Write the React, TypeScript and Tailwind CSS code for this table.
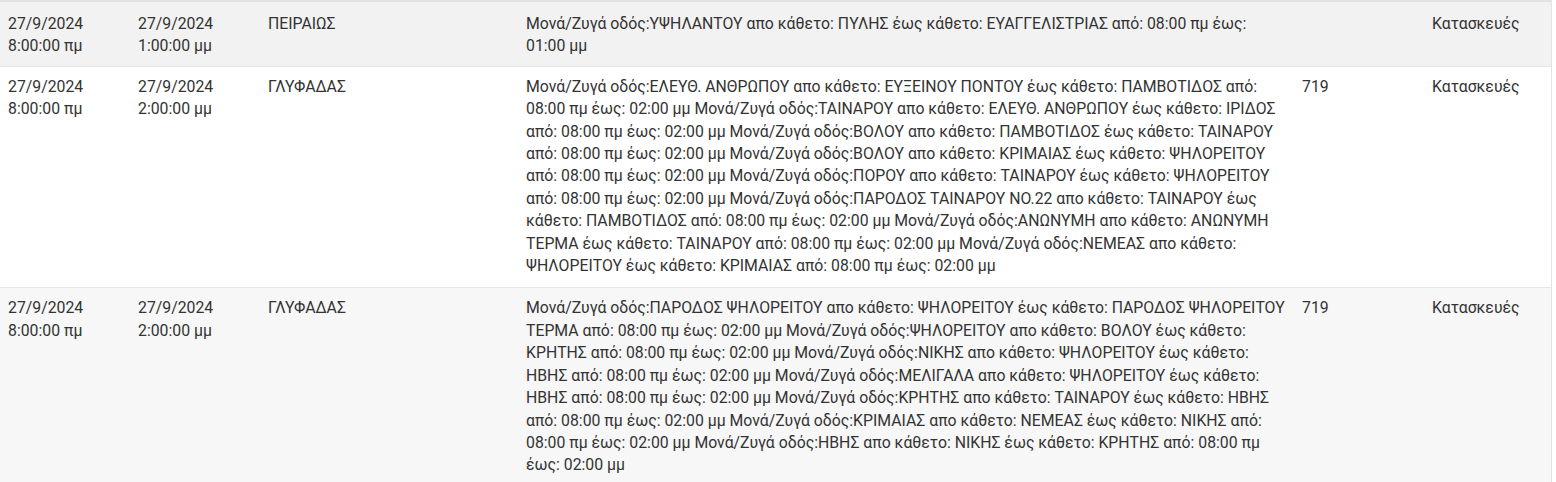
const rows = [
  {
    start: ["27/9/2024", "8:00:00 πμ"],
    end: ["27/9/2024", "1:00:00 μμ"],
    area: "ΠΕΙΡΑΙΩΣ",
    desc: "Μονά/Ζυγά οδός:ΥΨΗΛΑΝΤΟΥ απο κάθετο: ΠΥΛΗΣ έως κάθετο: ΕΥΑΓΓΕΛΙΣΤΡΙΑΣ από: 08:00 πμ έως: 01:00 μμ",
    code: "",
    type: "Κατασκευές",
    bg: "bg-[#f2f2f2]",
    pad: "pt-[11px] pb-[8px]",
  },
  {
    start: ["27/9/2024", "8:00:00 πμ"],
    end: ["27/9/2024", "2:00:00 μμ"],
    area: "ΓΛΥΦΑΔΑΣ",
    desc: "Μονά/Ζυγά οδός:ΕΛΕΥΘ. ΑΝΘΡΩΠΟΥ απο κάθετο: ΕΥΞΕΙΝΟΥ ΠΟΝΤΟΥ έως κάθετο: ΠΑΜΒΟΤΙΔΟΣ από: 08:00 πμ έως: 02:00 μμ Μονά/Ζυγά οδός:ΤΑΙΝΑΡΟΥ απο κάθετο: ΕΛΕΥΘ. ΑΝΘΡΩΠΟΥ έως κάθετο: ΙΡΙΔΟΣ από: 08:00 πμ έως: 02:00 μμ Μονά/Ζυγά οδός:ΒΟΛΟΥ απο κάθετο: ΠΑΜΒΟΤΙΔΟΣ έως κάθετο: ΤΑΙΝΑΡΟΥ από: 08:00 πμ έως: 02:00 μμ Μονά/Ζυγά οδός:ΒΟΛΟΥ απο κάθετο: ΚΡΙΜΑΙΑΣ έως κάθετο: ΨΗΛΟΡΕΙΤΟΥ από: 08:00 πμ έως: 02:00 μμ Μονά/Ζυγά οδός:ΠΟΡΟΥ απο κάθετο: ΤΑΙΝΑΡΟΥ έως κάθετο: ΨΗΛΟΡΕΙΤΟΥ από: 08:00 πμ έως: 02:00 μμ Μονά/Ζυγά οδός:ΠΑΡΟΔΟΣ ΤΑΙΝΑΡΟΥ ΝΟ.22 απο κάθετο: ΤΑΙΝΑΡΟΥ έως κάθετο: ΠΑΜΒΟΤΙΔΟΣ από: 08:00 πμ έως: 02:00 μμ Μονά/Ζυγά οδός:ΑΝΩΝΥΜΗ απο κάθετο: ΑΝΩΝΥΜΗ ΤΕΡΜΑ έως κάθετο: ΤΑΙΝΑΡΟΥ από: 08:00 πμ έως: 02:00 μμ Μονά/Ζυγά οδός:ΝΕΜΕΑΣ απο κάθετο: ΨΗΛΟΡΕΙΤΟΥ έως κάθετο: ΚΡΙΜΑΙΑΣ από: 08:00 πμ έως: 02:00 μμ",
    code: "719",
    type: "Κατασκευές",
    bg: "bg-white",
    pad: "pt-[9px] pb-[10px]",
  },
  {
    start: ["27/9/2024", "8:00:00 πμ"],
    end: ["27/9/2024", "2:00:00 μμ"],
    area: "ΓΛΥΦΑΔΑΣ",
    desc: "Μονά/Ζυγά οδός:ΠΑΡΟΔΟΣ ΨΗΛΟΡΕΙΤΟΥ απο κάθετο: ΨΗΛΟΡΕΙΤΟΥ έως κάθετο: ΠΑΡΟΔΟΣ ΨΗΛΟΡΕΙΤΟΥ ΤΕΡΜΑ από: 08:00 πμ έως: 02:00 μμ Μονά/Ζυγά οδός:ΨΗΛΟΡΕΙΤΟΥ απο κάθετο: ΒΟΛΟΥ έως κάθετο: ΚΡΗΤΗΣ από: 08:00 πμ έως: 02:00 μμ Μονά/Ζυγά οδός:ΝΙΚΗΣ απο κάθετο: ΨΗΛΟΡΕΙΤΟΥ έως κάθετο: ΗΒΗΣ από: 08:00 πμ έως: 02:00 μμ Μονά/Ζυγά οδός:ΜΕΛΙΓΑΛΑ απο κάθετο: ΨΗΛΟΡΕΙΤΟΥ έως κάθετο: ΗΒΗΣ από: 08:00 πμ έως: 02:00 μμ Μονά/Ζυγά οδός:ΚΡΗΤΗΣ απο κάθετο: ΤΑΙΝΑΡΟΥ έως κάθετο: ΗΒΗΣ από: 08:00 πμ έως: 02:00 μμ Μονά/Ζυγά οδός:ΚΡΙΜΑΙΑΣ απο κάθετο: ΝΕΜΕΑΣ έως κάθετο: ΝΙΚΗΣ από: 08:00 πμ έως: 02:00 μμ Μονά/Ζυγά οδός:ΗΒΗΣ απο κάθετο: ΝΙΚΗΣ έως κάθετο: ΚΡΗΤΗΣ από: 08:00 πμ έως: 02:00 μμ",
    code: "719",
    type: "Κατασκευές",
    bg: "bg-[#f7f7f7]",
    pad: "pt-[9px] pb-[10px]",
  },
];

export default function App() {
  return (
    <div className="w-[1552px] border-r border-[#e4e4e4] bg-white font-['Roboto',sans-serif] text-[15.8px] leading-[22.4px] text-[#333]">
      <table className="w-full table-fixed border-collapse border-t-2 border-[#e2e2e2]">
        <colgroup>
          <col className="w-[130px]" />
          <col className="w-[130px]" />
          <col className="w-[258px]" />
          <col className="w-[776px]" />
          <col className="w-[130px]" />
          <col />
        </colgroup>
        <tbody>
          {rows.map((r, i) => (
            <tr key={i} className={`${r.bg} border-b border-[#e6e6e6] align-top`}>
              <td className={`px-2 ${r.pad}`}>
                {r.start[0]}
                <br />
                {r.start[1]}
              </td>
              <td className={`px-2 ${r.pad}`}>
                {r.end[0]}
                <br />
                {r.end[1]}
              </td>
              <td className={`px-2 ${r.pad}`}>{r.area}</td>
              <td className={`px-2 ${r.pad}`}>{r.desc}</td>
              <td className={`px-2 ${r.pad}`}>{r.code}</td>
              <td className={`px-2 ${r.pad}`}>{r.type}</td>
            </tr>
          ))}
        </tbody>
      </table>
    </div>
  );
}
